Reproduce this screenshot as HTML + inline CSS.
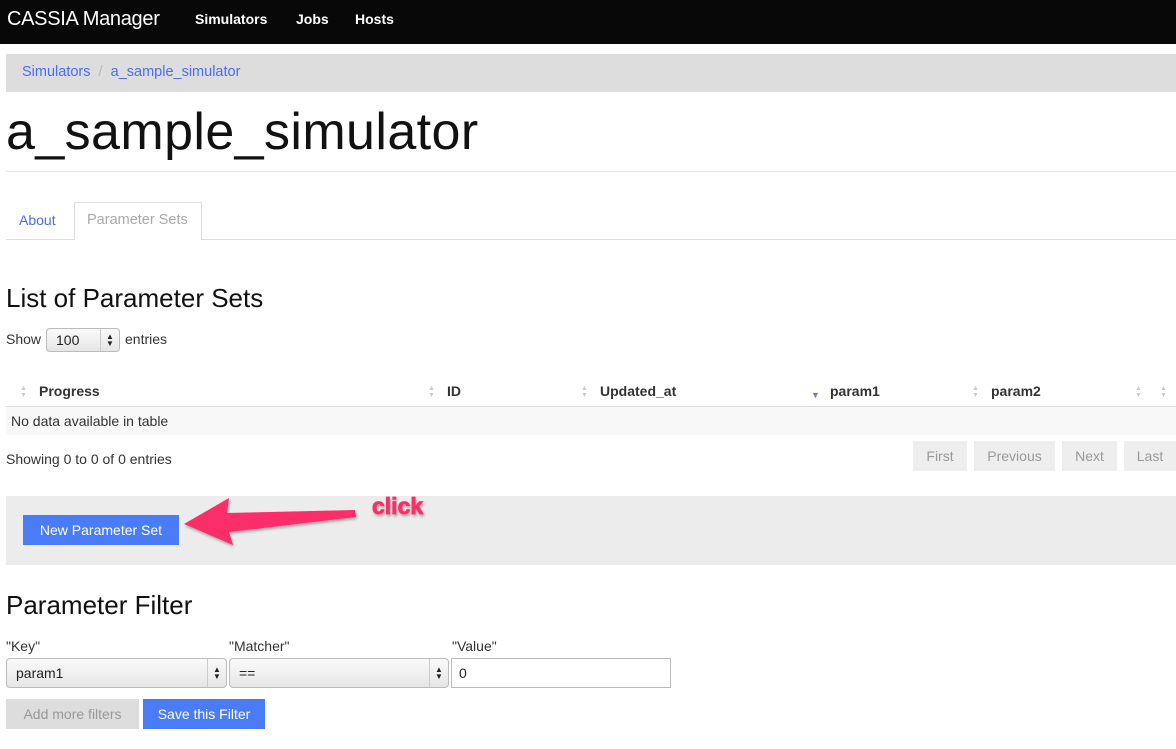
<!DOCTYPE html>
<html><head><meta charset="utf-8"><style>
*{box-sizing:border-box;margin:0;padding:0}
body{width:1176px;height:749px;overflow:hidden;background:#fff;font-family:"Liberation Sans",sans-serif;color:#222;position:relative}
.a{position:absolute;white-space:nowrap}
.blue{color:#4a6cf7}
.btn{position:absolute;display:flex;align-items:center;justify-content:center;font-size:14px}
.sel{position:absolute;border:1px solid #bbb;border-radius:4px;background:linear-gradient(#fafafa,#e6e6e6);font-size:14px;padding-left:9px;display:flex;align-items:center}
.sel .ar{position:absolute;right:0;top:0;bottom:0;width:19px;border-left:1px solid #ccc;font-size:8px;line-height:7px;display:flex;flex-direction:column;align-items:center;justify-content:center;color:#222}
.th{font-weight:bold;font-size:14px;color:#333;top:383px}
.si{position:absolute;top:385px;font-size:7px;line-height:7px;color:#ccc}
</style></head><body>
<div class="a" style="left:0;top:0;width:1176px;height:44px;background:#080808"></div>
<div class="a" style="left:7px;top:8px;font-size:20px;color:#fff;letter-spacing:-0.3px">CASSIA Manager</div>
<div class="a" style="left:195px;top:11px;font-size:14px;color:#fff;font-weight:bold">Simulators</div>
<div class="a" style="left:296px;top:11px;font-size:14px;color:#fff;font-weight:bold">Jobs</div>
<div class="a" style="left:355px;top:11px;font-size:14px;color:#fff;font-weight:bold">Hosts</div>
<div class="a" style="left:6px;top:54px;width:1170px;height:38px;background:#ddd"></div>
<div class="a blue" style="left:22px;top:64px;font-size:14.5px">Simulators <span style="color:#bbb">&nbsp;/&nbsp;</span> a_sample_simulator</div>
<div class="a" style="left:6px;top:102px;font-size:52px;color:#111;letter-spacing:0.4px">a_sample_simulator</div>
<div class="a" style="left:6px;top:171px;width:1170px;height:1px;background:#e6e6e6"></div>
<div class="a blue" style="left:19px;top:212px;font-size:14px">About</div>
<div class="a" style="left:74px;top:202px;width:128px;height:38px;border:1px solid #ddd;border-bottom:none;background:#fff;z-index:2"></div>
<div class="a" style="left:87px;top:212px;font-size:14.5px;color:#aaa;z-index:3">Parameter Sets</div>
<div class="a" style="left:6px;top:239px;width:1170px;height:1px;background:#ddd"></div>
<div class="a" style="left:6px;top:283px;font-size:26px;color:#111">List of Parameter Sets</div>
<div class="a" style="left:6px;top:331px;font-size:14px;color:#333">Show</div>
<div class="sel" style="left:46px;top:328px;width:74px;height:24px">100<div class="ar">▲<br>▼</div></div>
<div class="a" style="left:125px;top:331px;font-size:14px;color:#333">entries</div>
<div class="si" style="left:20px">▲<br>▼</div><div class="a th" style="left:39px">Progress</div>
<div class="si" style="left:428px">▲<br>▼</div><div class="a th" style="left:447px">ID</div>
<div class="si" style="left:581px">▲<br>▼</div><div class="a th" style="left:600px">Updated_at</div>
<div class="a" style="left:811px;top:390px;font-size:9px;color:#7b73d8">▼</div><div class="a th" style="left:830px">param1</div>
<div class="si" style="left:972px">▲<br>▼</div><div class="a th" style="left:991px">param2</div>
<div class="si" style="left:1135px">▲<br>▼</div><div class="si" style="left:1160px">▲<br>▼</div>
<div class="a" style="left:6px;top:406px;width:1170px;height:1px;background:#ddd"></div>
<div class="a" style="left:6px;top:407px;width:1170px;height:28px;background:#f8f8f8"></div>
<div class="a" style="left:11px;top:413px;font-size:14px;color:#333">No data available in table</div>
<div class="a" style="left:6px;top:451px;font-size:14px;color:#333">Showing 0 to 0 of 0 entries</div>
<div class="btn" style="left:913px;top:441px;width:54px;height:30px;background:#eee;color:#999">First</div>
<div class="btn" style="left:974px;top:441px;width:81px;height:30px;background:#eee;color:#999">Previous</div>
<div class="btn" style="left:1062px;top:441px;width:55px;height:30px;background:#eee;color:#999">Next</div>
<div class="btn" style="left:1124px;top:441px;width:52px;height:30px;background:#eee;color:#999">Last</div>
<div class="a" style="left:6px;top:496px;width:1170px;height:69px;background:#ececec"></div>
<div class="btn" style="left:23px;top:515px;width:156px;height:30px;background:#4a7cf7;color:#fff">New Parameter Set</div>
<svg class="a" style="left:0;top:0" width="1176" height="749"><defs><filter id="s"><feDropShadow dx="1" dy="2" stdDeviation="1.2" flood-opacity=".3"/></filter></defs>
<path d="M184 524 L229 498 L227 513 L355 510 L356 517 L229 532 L233 545 Z" fill="#fb2d6a" filter="url(#s)"/>
<text x="372" y="514" font-family="Liberation Sans" font-weight="bold" font-size="23" fill="#fb2d6a" stroke="#fb2d6a" stroke-width="0.8" filter="url(#s)">click</text></svg>
<div class="a" style="left:6px;top:590px;font-size:26px;color:#111">Parameter Filter</div>
<div class="a" style="left:6px;top:638px;font-size:14px;color:#333">"Key"</div>
<div class="a" style="left:229px;top:638px;font-size:14px;color:#333">"Matcher"</div>
<div class="a" style="left:452px;top:638px;font-size:14px;color:#333">"Value"</div>
<div class="sel" style="left:6px;top:658px;width:221px;height:30px">param1<div class="ar">▲<br>▼</div></div>
<div class="sel" style="left:229px;top:658px;width:220px;height:30px">==<div class="ar">▲<br>▼</div></div>
<div class="a" style="left:451px;top:658px;width:220px;height:30px;border:1px solid #bbb;font-size:14px;padding:6px 0 0 7px">0</div>
<div class="btn" style="left:6px;top:699px;width:133px;height:30px;background:#ddd;color:#999">Add more filters</div>
<div class="btn" style="left:143px;top:699px;width:122px;height:30px;background:#4a7cf7;color:#fff">Save this Filter</div>
</body></html>
